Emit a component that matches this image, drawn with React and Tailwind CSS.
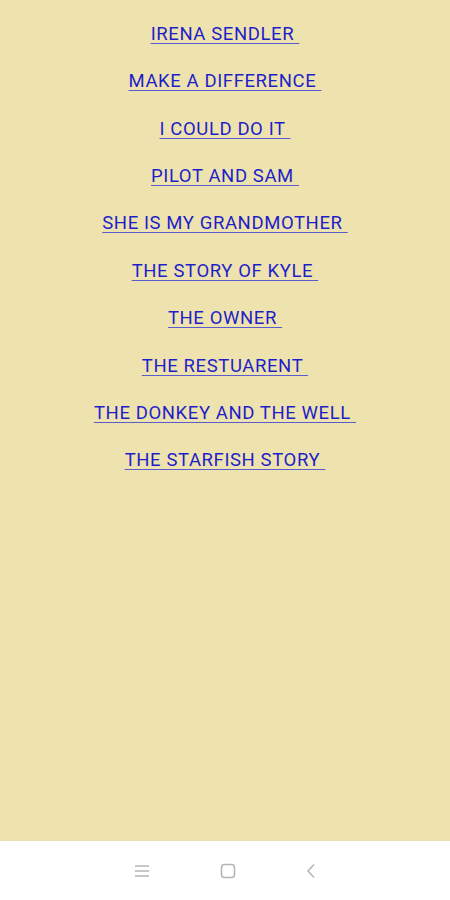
import React from 'react'

const stories = [
  'IRENA SENDLER',
  'MAKE A DIFFERENCE',
  'I COULD DO IT',
  'PILOT AND SAM',
  'SHE IS MY GRANDMOTHER',
  'THE STORY OF KYLE',
  'THE OWNER',
  'THE RESTUARENT',
  'THE DONKEY AND THE WELL',
  'THE STARFISH STORY',
]

const App = () => {
  return (
    <div className="flex flex-col h-[900px] w-[450px] font-['Roboto',sans-serif]">
      {/* STORY LIST */}
      <div className="flex-1 bg-[#eee3ae] flex flex-col items-center pt-[11px]">
        {stories.map((title) => (
          <div key={title} className="h-[47.4px] flex items-center">
            <a href="#" className="text-[18.5px] tracking-[0.6px] text-[#1f1fc9] underline decoration-[#5b5bd0] underline-offset-[3px] whitespace-pre">
              {title + ' '}
            </a>
          </div>
        ))}
      </div>

      {/* NAV BAR */}
      <div className="h-[59px] bg-white flex items-center justify-center gap-[70px] text-[#b5b5b5]">
        <svg width="16" height="14" viewBox="0 0 16 14" fill="none" stroke="currentColor" strokeWidth="1.4">
          <path d="M1 2h14M1 7h14M1 12h14" />
        </svg>
        <svg width="16" height="16" viewBox="0 0 16 16" fill="none" stroke="currentColor" strokeWidth="1.6">
          <rect x="1.5" y="1.5" width="13" height="13" rx="3" />
        </svg>
        <svg width="10" height="16" viewBox="0 0 10 16" fill="none" stroke="currentColor" strokeWidth="1.5">
          <path d="M8 1.5L2 8l6 6.5" />
        </svg>
      </div>
    </div>
  )
}

export default App
